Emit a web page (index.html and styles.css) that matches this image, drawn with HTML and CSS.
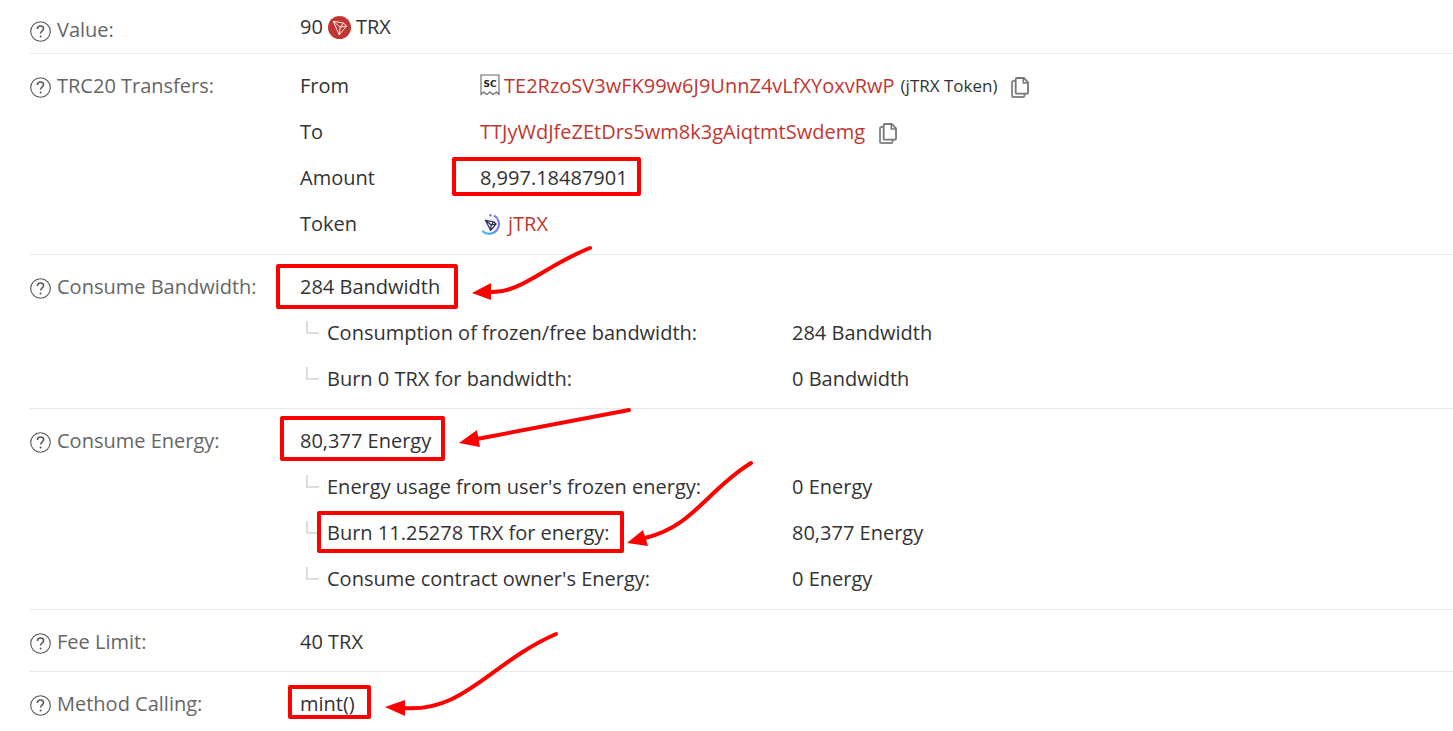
FILE: index.html
```html
<!DOCTYPE html>
<html lang="en">
<head>
  <meta charset="UTF-8">
  <meta name="viewport" content="width=device-width, initial-scale=1.0">
  <title>Transaction Details</title>
  <link rel="stylesheet" href="styles.css">
</head>
<body>
  <!-- Shared icons -->
  <svg class="sprite" aria-hidden="true">
    <symbol id="icon-help" viewBox="0 0 21 21">
      <circle cx="10.5" cy="10.5" r="9.8" fill="none" stroke="#555" stroke-width="1.1"/>
      <path d="M7.4 8C7.4 6 8.7 5 10.5 5C12.4 5 13.6 6.1 13.6 7.6C13.6 9.8 10.6 9.9 10.6 12.6" fill="none" stroke="#555" stroke-width="1.5"/>
      <circle cx="10.6" cy="15.4" r="1" fill="#555"/>
    </symbol>
    <symbol id="icon-copy" viewBox="0 0 18 21">
      <path d="M4.5 4H2.3Q1 4 1 5.3V18.7Q1 20 2.3 20H12.2Q13.5 20 13.5 18.7V17" fill="none" stroke="#888" stroke-width="1.9"/>
      <path d="M6 1H12.8L17 5.4V15.4Q17 16.7 15.7 16.7H6Q4.7 16.7 4.7 15.4V2.3Q4.7 1 6 1Z" fill="#fff" stroke="#777" stroke-width="1.8"/>
      <path d="M12.3 1V6H17" fill="none" stroke="#777" stroke-width="1.5"/>
    </symbol>
  </svg>

  <main class="details">
    <section class="row row-first">
      <h2 class="label"><svg class="help"><use href="#icon-help"/></svg>Value:</h2>
      <div class="content">
        <div class="line value">
          90
          <svg class="trx-logo" viewBox="0 0 23 23">
            <circle cx="11.5" cy="11.5" r="11.5" fill="#c23631"/>
            <path d="M5.2 5.2L15.5 7.1L18.6 10L11.2 18.8Z M5.2 5.2L12.2 11.2L11.2 18.8 M12.2 11.2L18.6 10 M12.2 11.2L15.5 7.1" fill="none" stroke="#fff" stroke-width="0.9" stroke-linejoin="round"/>
          </svg>
          TRX
        </div>
      </div>
    </section>

    <section class="row row-tall">
      <h2 class="label"><svg class="help"><use href="#icon-help"/></svg>TRC20 Transfers:</h2>
      <dl class="content transfer">
        <dt>From</dt>
        <dd>
          <svg class="contract" viewBox="0 0 20 22">
            <path d="M1 20.5V1H19V20.5L16.5 18L13.2 20.5L10 18L6.8 20.5L3.5 18Z" fill="#fff" stroke="#666" stroke-width="1.1"/>
            <text class="contract-text" x="10" y="13" text-anchor="middle">SC</text>
          </svg>
          <a href="#">TE2RzoSV3wFK99w6J9UnnZ4vLfXYoxvRwP</a>
          <span class="tag">(jTRX Token)</span>
          <button class="copy" type="button" aria-label="Copy sender address"><svg><use href="#icon-copy"/></svg></button>
        </dd>
        <dt>To</dt>
        <dd>
          <a href="#">TTJyWdJfeZEtDrs5wm8k3gAiqtmtSwdemg</a>
          <button class="copy" type="button" aria-label="Copy recipient address"><svg><use href="#icon-copy"/></svg></button>
        </dd>
        <dt>Amount</dt>
        <dd>8,997.18487901</dd>
        <dt>Token</dt>
        <dd>
          <svg class="token" viewBox="0 0 22 22">
            <defs>
              <linearGradient id="ring" x1="1" y1="0" x2="0" y2="1">
                <stop offset="0.4" stop-color="#7a73f5"/>
                <stop offset="1" stop-color="#22c5f7"/>
              </linearGradient>
            </defs>
            <circle cx="11" cy="11" r="9" fill="#f4f5fa"/>
            <path d="M14 1.5A9.8 9.8 0 1 1 2.3 17" fill="none" stroke="url(#ring)" stroke-width="2"/>
            <circle cx="10.4" cy="1.3" r="1.2" fill="#7a73f5"/>
            <path d="M5.5 6.3L13.7 7.8L16 10L10.6 16.3Z M5.5 6.3L11.2 11L10.6 16.3 M11.2 11L16 10 M11.2 11L13.7 7.8" fill="none" stroke="#2c2b55" stroke-width="1.2" stroke-linejoin="round"/>
          </svg>
          <a href="#">jTRX</a>
        </dd>
      </dl>
    </section>

    <section class="row">
      <h2 class="label"><svg class="help"><use href="#icon-help"/></svg>Consume Bandwidth:</h2>
      <div class="content">
        <div class="line">284 Bandwidth</div>
        <dl class="tree">
          <dt>Consumption of frozen/free bandwidth:</dt>
          <dd>284 Bandwidth</dd>
          <dt>Burn 0 TRX for bandwidth:</dt>
          <dd>0 Bandwidth</dd>
        </dl>
      </div>
    </section>

    <section class="row row-tall">
      <h2 class="label"><svg class="help"><use href="#icon-help"/></svg>Consume Energy:</h2>
      <div class="content">
        <div class="line">80,377 Energy</div>
        <dl class="tree">
          <dt>Energy usage from user's frozen energy:</dt>
          <dd>0 Energy</dd>
          <dt>Burn 11.25278 TRX for energy:</dt>
          <dd>80,377 Energy</dd>
          <dt>Consume contract owner's Energy:</dt>
          <dd>0 Energy</dd>
        </dl>
      </div>
    </section>

    <section class="row">
      <h2 class="label"><svg class="help"><use href="#icon-help"/></svg>Fee Limit:</h2>
      <div class="content"><div class="line">40 TRX</div></div>
    </section>

    <section class="row row-last">
      <h2 class="label"><svg class="help"><use href="#icon-help"/></svg>Method Calling:</h2>
      <div class="content"><div class="line">mint()</div></div>
    </section>
  </main>

  <!-- Red boxes and arrows drawn over the details -->
  <svg class="marks" width="760" height="731" viewBox="0 0 760 731" aria-hidden="true">
    <g class="mark-line">
      <rect x="454" y="159" width="185" height="35"/>
      <rect x="278" y="266" width="178" height="41"/>
      <rect x="282" y="418" width="161" height="41"/>
      <rect x="319" y="513" width="303" height="38"/>
      <rect x="290" y="687" width="79" height="30"/>
      <path d="M490 292C520 294 546 265 590 248"/>
      <path d="M477 439L629 410"/>
      <path d="M645 538C694 526 707 490 751 463"/>
      <path d="M403 708C464 713 490 663 556 634"/>
    </g>
    <g class="mark-head">
      <path d="M472 293L491 283V300Z"/>
      <path d="M459 443L477 430L480 447Z"/>
      <path d="M627 543L643 530L648 546Z"/>
      <path d="M385 707L405 700V716Z"/>
    </g>
  </svg>
</body>
</html>
```
FILE: styles.css
```css
* {
  box-sizing: border-box;
}
body {
  margin: 0;
  background: #fff;
  color: #333;
  font-family: "Open Sans", "Noto Sans", sans-serif;
  font-size: 20px;
  line-height: 46px;
}
.sprite {
  display: none;
}
.details {
  padding-left: 30px;
}

/* Rows */
.row {
  display: flex;
  padding: 9px 0 6px;
  border-bottom: 1px solid #ebebeb;
}
.row-first {
  padding: 7px 0 0;
}
.row-tall {
  padding-bottom: 7px;
}
.row-last {
  padding-bottom: 0;
  border-bottom: none;
}
.label {
  display: flex;
  align-items: center;
  gap: 6px;
  flex: 0 0 270px;
  height: 46px;
  margin: 0;
  color: #666;
  font-size: 20px;
  font-weight: 400;
}
.help {
  width: 21px;
  height: 21px;
  margin-top: 2px;
}
.content {
  flex: 1;
  margin: 0;
}
dd {
  margin: 0;
}
a {
  color: #c23631;
  text-decoration: none;
}
a:hover {
  text-decoration: underline;
}
.value {
  display: flex;
  align-items: center;
  gap: 5px;
  line-height: 40px;
}
.trx-logo {
  width: 23px;
  height: 23px;
}

/* TRC20 transfer */
.transfer {
  display: grid;
  grid-template-columns: 180px 1fr;
}
.transfer dd {
  display: flex;
  align-items: center;
  height: 46px;
}
.contract {
  width: 20px;
  height: 22px;
  margin: 0 4px 2px 0;
}
.contract-text {
  fill: #222;
  font: bold 9px "DejaVu Sans", sans-serif;
}
.token {
  width: 22px;
  height: 22px;
  margin: 2px 6px 0 0;
}
.tag {
  margin-left: 6px;
  font-size: 17px;
}
.copy {
  display: flex;
  margin: 2px 0 0 14px;
  padding: 0;
  border: none;
  background: none;
  cursor: pointer;
}
.copy svg {
  width: 18px;
  height: 21px;
}

/* Bandwidth and energy breakdown */
.tree {
  display: grid;
  grid-template-columns: 492px 1fr;
  margin: 0;
}
.tree dt {
  display: flex;
}
.tree dt::before {
  content: "";
  width: 13px;
  height: 13px;
  box-sizing: border-box;
  margin: 11px 8px 0 6px;
  border-left: 2px solid #ddd;
  border-bottom: 2px solid #ddd;
}

.marks {
  position: absolute;
  top: 0;
  left: 0;
  pointer-events: none;
}
.mark-line {
  fill: none;
  stroke: #f00;
  stroke-width: 4px;
  stroke-linecap: round;
  stroke-linejoin: round;
}
.mark-head {
  fill: #f00;
}
```
